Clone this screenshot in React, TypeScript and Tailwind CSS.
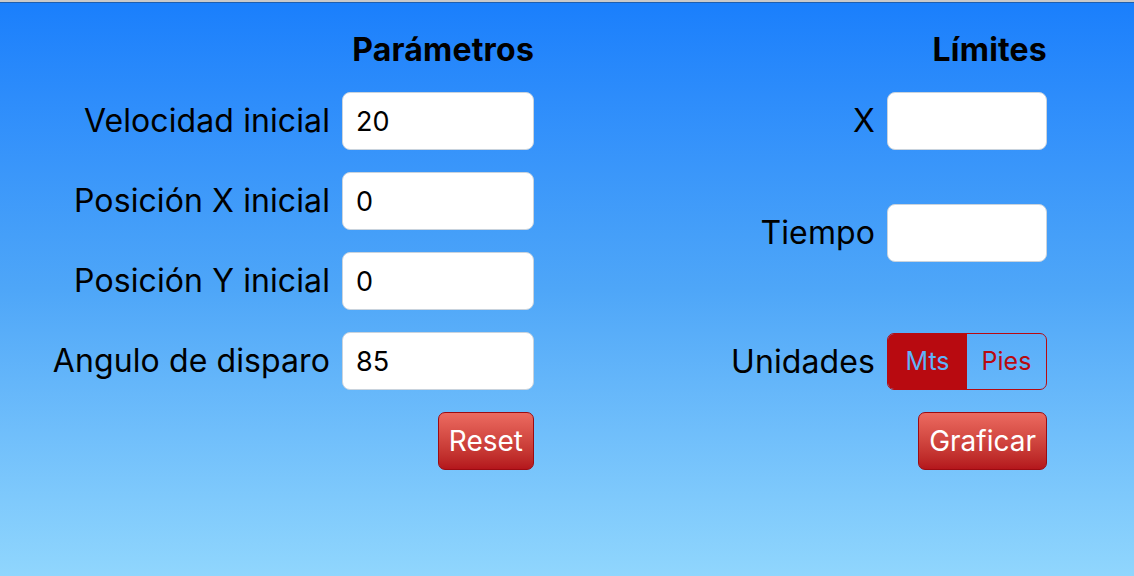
import { useState } from "react";

const font = { fontFamily: '"Inter", "Liberation Sans", sans-serif' };

function Field({ label, value, width }: { label: string; value: string; width: string }) {
    return <div className="flex items-center justify-end h-[58px]">
        <span className="text-[32px] text-black mr-[12px] tracking-[0.1px]">{label}</span>
        <input
            defaultValue={value}
            className={`${width} h-[58px] rounded-[8px] bg-white border border-[#c9d3dd] px-[13px] text-[27px] text-black outline-none`}
        />
    </div>
}

function RedButton({ children }: { children: string }) {
    return <button className="h-[58px] px-[10px] rounded-[7px] border-[1.5px] border-[#9c0b12] bg-gradient-to-b from-[#ec6a60] to-[#b4161c] text-white text-[28px] leading-none">
        {children}
    </button>
}

export default function App() {
    const [units, setUnits] = useState<"mts" | "pies">("mts");

    return <div className="h-[576px] w-full flex flex-col overflow-hidden" style={font}>
        <div className="h-[2px] bg-[#c9c9c9]"></div>
        <div className="h-px bg-[#1f5fae]"></div>
        <div className="flex-1 flex bg-gradient-to-b from-[#1a7ffc] via-[#4ea6f8] to-[#90d6fd] pt-[27px]">
            {/* parametros */}
            <div className="w-[534px] flex flex-col items-end">
                <div className="h-[40px] flex items-center text-[32px] font-bold text-black mb-[22px] tracking-[0.2px]">Parámetros</div>
                <div className="flex flex-col gap-[22px]">
                    <Field label="Velocidad inicial" value="20" width="w-[192px]" />
                    <Field label="Posición X inicial" value="0" width="w-[192px]" />
                    <Field label="Posición Y inicial" value="0" width="w-[192px]" />
                    <Field label="Angulo de disparo" value="85" width="w-[192px]" />
                    <div className="flex justify-end">
                        <RedButton>Reset</RedButton>
                    </div>
                </div>
            </div>
            {/* limites */}
            <div className="ml-auto mr-[87px] flex flex-col items-end">
                <div className="h-[40px] flex items-center text-[32px] font-bold text-black mb-[22px] tracking-[0.2px]">Límites</div>
                <Field label="X" value="" width="w-[160px]" />
                <div className="mt-[54px]">
                    <Field label="Tiempo" value="" width="w-[160px]" />
                </div>
                <div className="mt-[71px] flex items-center h-[57px]">
                    <span className="text-[32px] text-black mr-[12px] tracking-[0.1px]">Unidades</span>
                    <div className="flex w-[160px] h-[57px] rounded-[7px] border-[1.5px] border-[#b80a10] overflow-hidden">
                        <button
                            onClick={() => setUnits("mts")}
                            className={units === "mts" ? "flex-1 bg-[#b80a10] text-[#5fb2f8] text-[25px]" : "flex-1 text-[#b80a10] text-[25px]"}>
                            Mts
                        </button>
                        <button
                            onClick={() => setUnits("pies")}
                            className={units === "pies" ? "flex-1 bg-[#b80a10] text-[#5fb2f8] text-[25px]" : "flex-1 text-[#b80a10] text-[25px]"}>
                            Pies
                        </button>
                    </div>
                </div>
                <div className="mt-[22px]">
                    <RedButton>Graficar</RedButton>
                </div>
            </div>
        </div>
    </div>
}
